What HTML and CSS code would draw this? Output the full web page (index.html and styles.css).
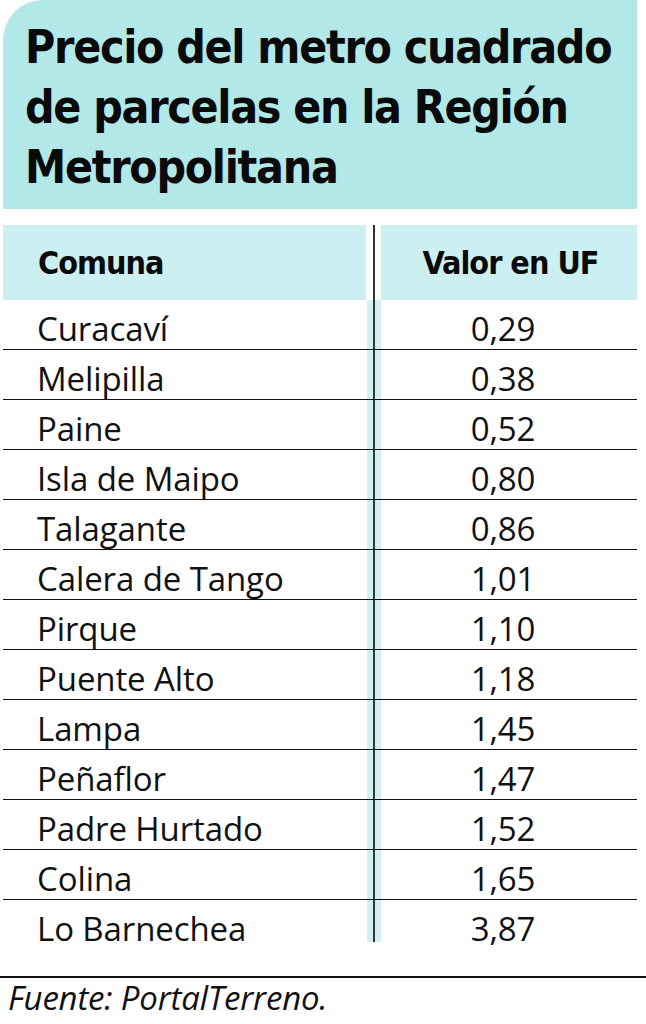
FILE: index.html
```html
<!DOCTYPE html>
<html lang="es">
<head>
<meta charset="utf-8">
<title>Precio del metro cuadrado de parcelas en la Región Metropolitana</title>
<link rel="stylesheet" href="styles.css">
</head>
<body>
<div class="page">
  <h1 class="title">Precio del metro cuadrado de parcelas en la Región Metropolitana</h1>
  <div class="table">
    <div class="hcell hname">Comuna</div>
    <div class="hmid"></div>
    <div class="hcell hval">Valor en UF</div>

    <div class="cell name">Curacaví</div><div class="mid"></div><div class="cell val">0,29</div>
    <div class="cell name">Melipilla</div><div class="mid"></div><div class="cell val">0,38</div>
    <div class="cell name">Paine</div><div class="mid"></div><div class="cell val">0,52</div>
    <div class="cell name">Isla de Maipo</div><div class="mid"></div><div class="cell val">0,80</div>
    <div class="cell name">Talagante</div><div class="mid"></div><div class="cell val">0,86</div>
    <div class="cell name">Calera de Tango</div><div class="mid"></div><div class="cell val">1,01</div>
    <div class="cell name">Pirque</div><div class="mid"></div><div class="cell val">1,10</div>
    <div class="cell name">Puente Alto</div><div class="mid"></div><div class="cell val">1,18</div>
    <div class="cell name">Lampa</div><div class="mid"></div><div class="cell val">1,45</div>
    <div class="cell name">Peñaflor</div><div class="mid"></div><div class="cell val">1,47</div>
    <div class="cell name">Padre Hurtado</div><div class="mid"></div><div class="cell val">1,52</div>
    <div class="cell name">Colina</div><div class="mid"></div><div class="cell val">1,65</div>
    <div class="cell name last">Lo Barnechea</div><div class="mid last"></div><div class="cell val last">3,87</div>
  </div>
  <div class="source">Fuente: PortalTerreno.</div>
</div>
</body>
</html>
```

FILE: styles.css
```css
html, body {
  margin: 0;
  padding: 0;
  background: #ffffff;
}

.page {
  width: 646px;
  font-family: "Open Sans", "Noto Sans", sans-serif;
  color: #111111;
}

.title {
  margin: 0 0 0 3px;
  width: 634px;
  height: 209px;
  box-sizing: border-box;
  padding: 17px 10px 0 22px;
  background: #b3e8e8;
  border-top-left-radius: 40px;
  font-family: "DejaVu Sans Condensed", "Open Sans", sans-serif;
  font-weight: 700;
  font-size: 46px;
  line-height: 60px;
  color: #0a0a0a;
  letter-spacing: -1.3px;
}

.table {
  margin: 16px 0 0 3px;
  width: 634px;
  display: grid;
  grid-template-columns: 363px 15px 256px;
}

.hcell {
  height: 75px;
  padding-top: 2px;
  background: #ccf0f1;
  font-family: "DejaVu Sans Condensed", "Open Sans", sans-serif;
  font-weight: 700;
  font-size: 32px;
  line-height: 73px;
  letter-spacing: -1px;
  color: #0a0a0a;
  box-sizing: border-box;
}

.hname {
  padding-left: 35px;
}

.hval {
  text-align: center;
  padding-left: 3px;
}

.hmid {
  height: 75px;
  background: linear-gradient(to right, transparent 7px, #333333 7px, #333333 8.5px, transparent 8.5px), #ffffff;
}

.cell {
  height: 50px;
  box-sizing: border-box;
  border-bottom: 1px solid #111111;
  font-size: 33px;
  line-height: 46px;
  padding-top: 6px;
  letter-spacing: -0.1px;
  white-space: nowrap;
}

.name {
  padding-left: 34px;
}

.val {
  text-align: center;
  padding-right: 12px;
}

.mid {
  height: 50px;
  box-sizing: border-box;
  border-bottom: 1px solid #111111;
  background: linear-gradient(to right, transparent 7px, #333333 7px, #333333 8.5px, transparent 8.5px),
              linear-gradient(to right, #ffffff 1px, #d0f1f3 1px);
}

.last {
  border-bottom: none;
  height: 42px;
}

.source {
  margin-top: 34px;
  width: 643px;
  border-top: 2px solid #111111;
  padding-left: 8px;
  font-style: italic;
  font-size: 33px;
  line-height: 40px;
  letter-spacing: -0.2px;
  color: #111111;
}
```
